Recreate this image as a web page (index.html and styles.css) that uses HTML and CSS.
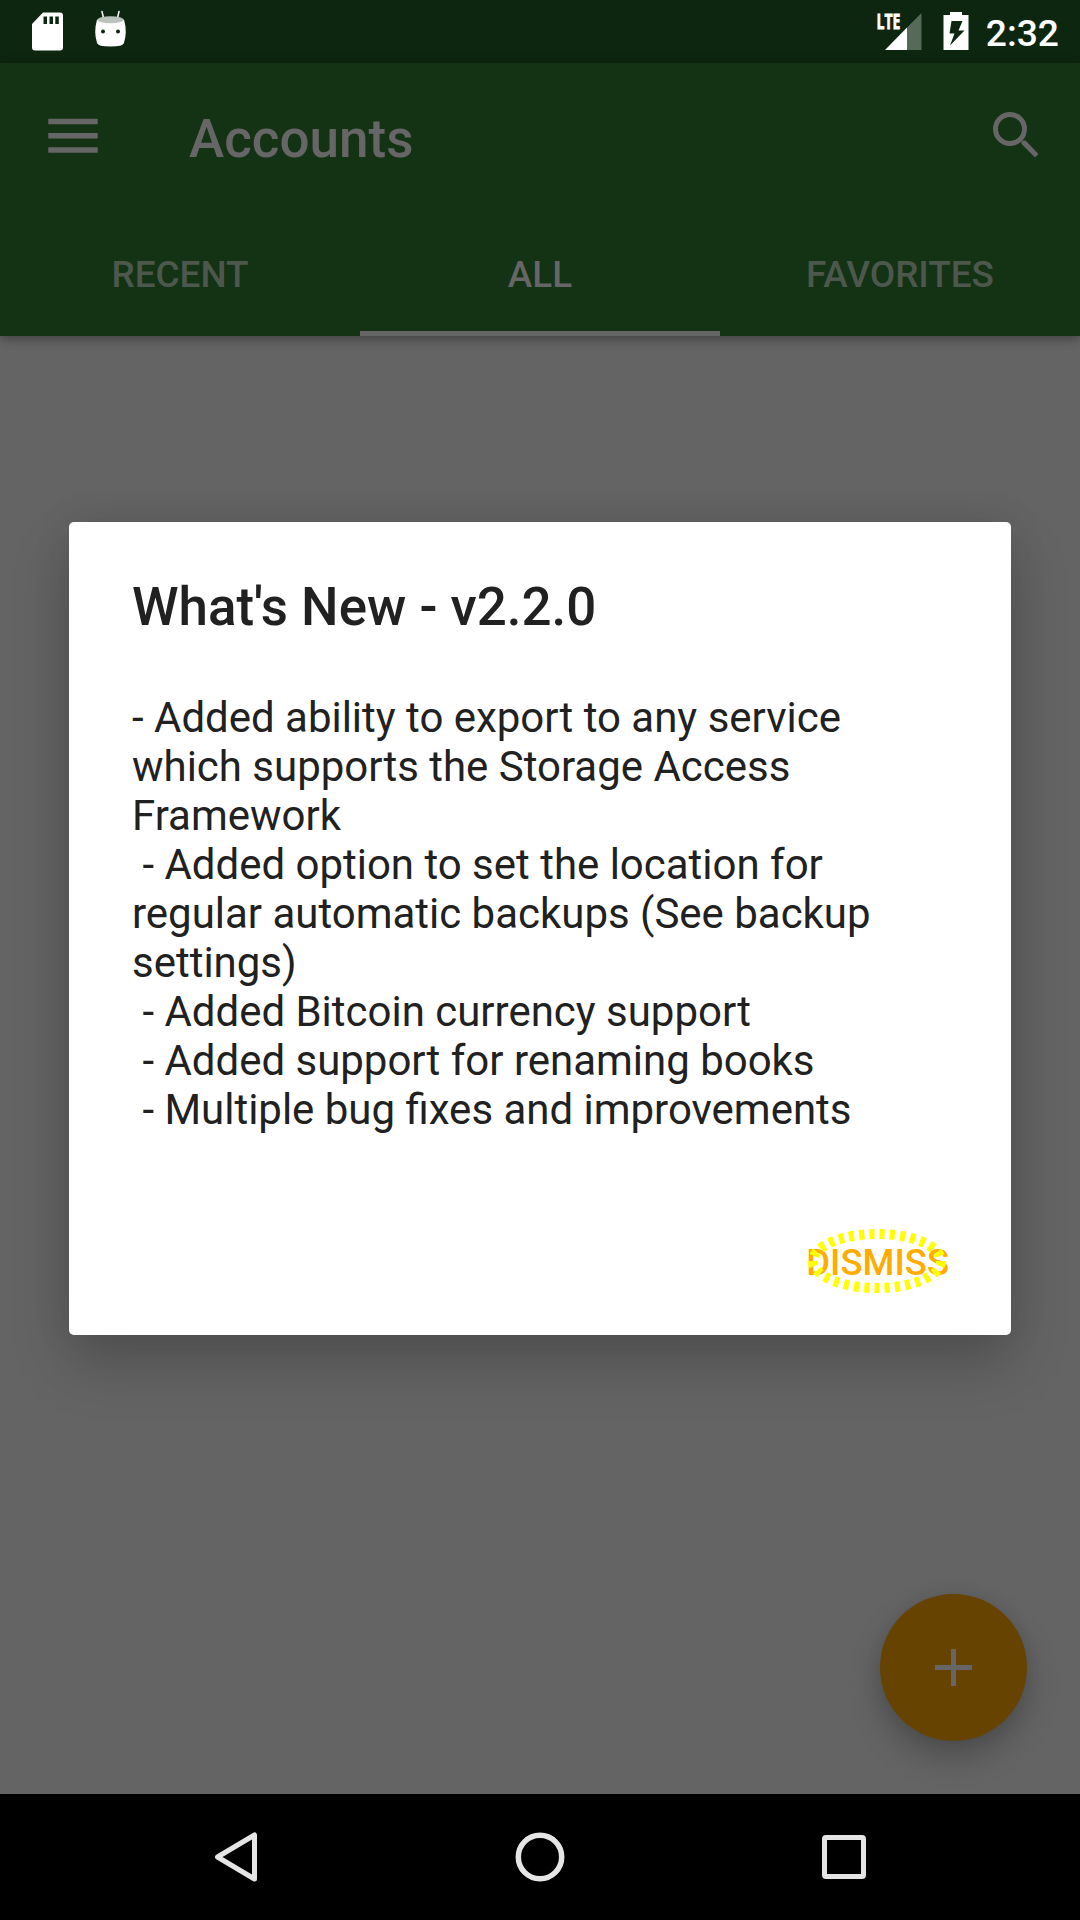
FILE: index.html
```html
<!DOCTYPE html>
<html lang="en">
<head>
<meta charset="utf-8">
<title>Accounts</title>
<link rel="stylesheet" href="styles.css">
</head>
<body>
<div class="screen">
  <header class="status-bar">
    <svg class="status-left" width="140" height="63" viewBox="0 0 140 63">
      <path fill="#fff" fill-rule="evenodd" d="M43 12.5H60Q63 12.5 63 15.500V47.500Q63 50.500 60 50.500H35Q32 50.500 32 47.500V24ZM43.500 16.500V24H47V16.500ZM49.500 16.500V24H53V16.500ZM55.300 16.500V24H58.800V16.500Z"/>
      <path stroke="#fff" stroke-width="1.500" stroke-linecap="round" d="M102 11.500L103.500 18M119 11.500L117.500 18"/>
      <path fill="#fff" fill-rule="evenodd" d="M97 19.500Q110.500 25.500 124 19.500Q127.500 32 124 43Q123 46.500 110.500 46.500Q98 46.500 97 43Q93.500 32 97 19.500ZM101 31.500a2 2 0 1 0 4 0a2 2 0 1 0-4 0ZM116 31.500a2 2 0 1 0 4 0a2 2 0 1 0-4 0Z"/>
      <ellipse cx="110.500" cy="19.700" rx="13" ry="3.500" fill="#bac3bb"/>
    </svg>
    <div class="status-right">
      <svg width="50" height="63" viewBox="0 0 50 63">
        <text class="lte" x="0.500" y="29" textLength="24" lengthAdjust="spacingAndGlyphs">LTE</text>
        <path fill="#556a58" d="M31 27.500L45.500 13V50H31Z"/>
        <path fill="#fff" d="M9 50L31 27.500V50Z"/>
      </svg>
      <svg class="battery" width="26" height="63" viewBox="0 0 26 63">
        <path fill="#fff" fill-rule="evenodd" d="M7 12H19V15H25.500V50H.5V15H7ZM8.500 21L6.500 33.500H11.500L7 45.500L21.500 30.500H15.500L19.500 21Z"/>
      </svg>
      <span class="clock">2:32</span>
    </div>
  </header>
  <div class="app-bar">
    <div class="toolbar">
      <svg width="50" height="36" viewBox="0 0 50 36"><path fill="#666" d="M.3 1.800H49.700V7.300H.3ZM.3 16H49.700V21.500H.3ZM.3 30.200H49.700V35.700H.3Z"/></svg>
      <h1 class="title">Accounts</h1>
      <svg width="46" height="46" viewBox="0 0 46 46"><circle cx="17" cy="17" r="14.500" fill="none" stroke="#666" stroke-width="5"/><path fill="#666" d="M28.500 32V29.600L30.500 28.500H32.500L45.500 42L42 45.500Z"/></svg>
    </div>
    <nav class="tabs">
      <span class="tab">RECENT</span>
      <span class="tab active">ALL</span>
      <span class="tab">FAVORITES</span>
    </nav>
  </div>
  <main class="content">
    <section class="dialog">
      <h2 class="dialog-title">What's New - v2.2.0</h2>
      <p class="dialog-text">- Added ability to export to any service
which supports the Storage Access
Framework
 - Added option to set the location for
regular automatic backups (See backup
settings)
 - Added Bitcoin currency support
 - Added support for renaming books
 - Multiple bug fixes and improvements</p>
      <div class="actions">
        <span class="dismiss">DISMISS
          <svg class="ring" width="140" height="66" viewBox="0 0 140 66"><ellipse cx="70" cy="33" rx="64" ry="27" pathLength="290" fill="none" stroke="#ff0" stroke-width="10" stroke-dasharray="5 5"/></svg>
        </span>
      </div>
    </section>
    <div class="fab"><svg width="37" height="37" viewBox="0 0 37 37"><path fill="#666" d="M16 0H21V16H37V21H21V37H16V21H0V16H16Z"/></svg></div>
  </main>
  <footer class="nav-bar">
    <svg width="50" height="50" viewBox="0 0 50 50"><path fill="none" stroke="#e5e5e5" stroke-width="5" stroke-linejoin="round" d="M43.500 3V47L6.500 25Z"/></svg>
    <svg width="50" height="50" viewBox="0 0 50 50"><circle cx="25" cy="25" r="21.700" fill="none" stroke="#e5e5e5" stroke-width="5.500"/></svg>
    <svg width="50" height="50" viewBox="0 0 50 50"><rect x="5.500" y="5.500" width="39" height="39" rx="1.500" fill="none" stroke="#e5e5e5" stroke-width="5"/></svg>
  </footer>
</div>
</body>
</html>
```
FILE: styles.css
```css
* { box-sizing: border-box; }
body { margin: 0; font-family: Roboto, sans-serif; }
h1, h2, p { margin: 0; font-weight: 400; }
svg { display: block; flex: none; }
.screen { width: 1080px; height: 1920px; display: flex; flex-direction: column; background: #646464; overflow: hidden; }
.status-bar { height: 63px; flex: none; display: flex; justify-content: space-between; background: #0d260f; }
.status-right { display: flex; padding-right: 21px; }
.lte { font: 700 22px "Open Sans", sans-serif; fill: #fff; stroke: #fff; stroke-width: .8px; }
.battery { margin-left: 17px; }
.clock { margin-left: 17px; font-size: 37.2px; font-weight: 500; line-height: 67px; color: #fff; }
.app-bar { height: 273px; flex: none; display: flex; flex-direction: column; background: #143214; box-shadow: 0 3px 10px rgba(0,0,0,.35); z-index: 1; }
.toolbar { height: 147px; padding: 0 41px 3px 48px; display: flex; align-items: center; }
.title { flex: 1; margin-left: 91px; padding-top: 8px; font-size: 53px; font-weight: 500; color: #666; }
.tabs { height: 126px; display: grid; grid-template-columns: repeat(3, 1fr); }
.tab { display: flex; align-items: center; justify-content: center; padding-top: 7px; border-bottom: 5px solid transparent; font-size: 36.9px; font-weight: 500; color: #4d584d; }
.tab.active { color: #666; border-color: #666; }
.content { height: 1458px; flex: none; padding: 186px 53px 53px 69px; display: flex; flex-direction: column; justify-content: space-between; align-items: flex-end; }
.dialog { width: 942px; height: 813px; margin-right: 16px; padding: 55px 63px 0; border-radius: 5px; background: #fff; color: #212121; box-shadow: 0 28px 60px rgba(0,0,0,.2), 0 0 40px rgba(0,0,0,.08); }
.dialog-title { font-size: 52.9px; font-weight: 500; line-height: 61px; }
.dialog-text { margin-top: 55px; font-size: 41.97px; line-height: 49px; white-space: pre; }
.actions { margin-top: 107px; display: flex; justify-content: flex-end; }
.dismiss { position: relative; margin-right: -1px; font-size: 36.5px; font-weight: 500; line-height: 43px; color: #ffab00; }
.ring { position: absolute; left: 1px; top: -13px; }
.fab { width: 147px; height: 147px; display: flex; align-items: center; justify-content: center; border-radius: 50%; background: #664400; box-shadow: 0 16px 32px rgba(0,0,0,.23), 0 0 16px rgba(0,0,0,.07); }
.nav-bar { height: 126px; flex: none; padding: 0 211px; display: flex; align-items: center; justify-content: space-between; background: #000; }
```
